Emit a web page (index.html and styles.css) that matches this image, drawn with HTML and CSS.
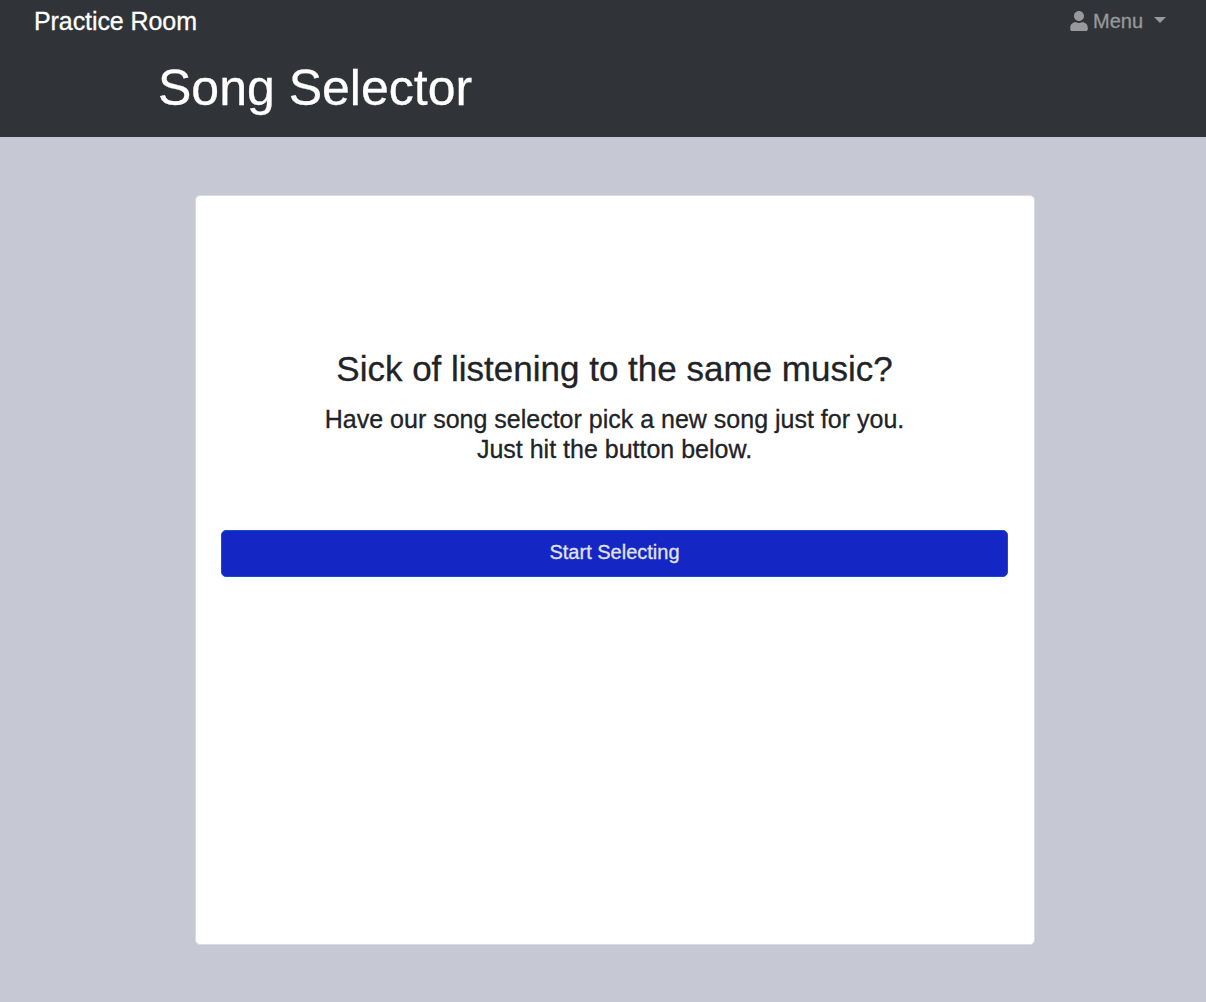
FILE: index.html
```html
<!DOCTYPE html>
<html lang="en">
<head>
<meta charset="utf-8">
<title>Practice Room</title>
<link rel="stylesheet" href="styles.css">
</head>
<body>
<header class="header">
  <nav class="navbar">
    <a class="brand">Practice Room</a>
    <a class="menu">
      <svg class="user" viewBox="0 0 448 512"><path fill="currentColor" d="M224 256c70.7 0 128-57.3 128-128S294.7 0 224 0 96 57.3 96 128s57.3 128 128 128zm89.6 32h-16.7c-22.2 10.2-46.9 16-72.9 16s-50.6-5.8-72.9-16h-16.7C60.2 288 0 348.2 0 422.4V464c0 26.5 21.5 48 48 48h352c26.5 0 48-21.5 48-48v-41.6c0-74.2-60.2-134.4-134.4-134.4z"/></svg>
      <span>Menu</span>
      <i class="caret"></i>
    </a>
  </nav>
  <h1 class="title">Song Selector</h1>
</header>
<main class="main">
  <section class="card">
    <h2 class="heading">Sick of listening to the same music?</h2>
    <p class="lead">Have our song selector pick a new song just for you.<br>Just hit the button below.</p>
    <button class="start">Start Selecting</button>
  </section>
</main>
</body>
</html>
```
FILE: styles.css
```css
* { box-sizing: border-box; }
body {
  margin: 0;
  min-height: 1002px;
  background: #c6c8d4;
  color: #212327;
  font-family: "Liberation Sans", Arial, sans-serif;
  -webkit-text-stroke: 0.3px currentColor;
}
.header {
  height: 137px;
  background: #303338;
  color: #fff;
}
.navbar {
  display: flex;
  justify-content: space-between;
  align-items: center;
  height: 43px;
  padding: 0 40px 0 34px;
}
.brand {
  font-size: 25px;
  letter-spacing: -0.08px;
}
.menu {
  display: flex;
  align-items: center;
  color: #97999c;
  font-size: 20px;
}
.user {
  width: 18px;
  height: 20px;
  margin: 0 5px 2px 0;
}
.caret {
  margin: 0 0 3px 11px;
  border: 6px solid transparent;
  border-top-color: currentColor;
  border-bottom: 0;
}
.title {
  margin: 15px 0 0 158px;
  font-size: 50px;
  font-weight: 400;
  line-height: 60px;
}
.main { padding: 58px 171px 58px 195px; }
.card {
  height: 750px;
  padding: 152px 26px 0 25px;
  border: 1px solid #dbdce0;
  border-radius: 5px;
  background: #fff;
  text-align: center;
}
.heading {
  margin: 0 0 14px;
  font-size: 35px;
  font-weight: 400;
  line-height: 42px;
}
.lead {
  margin: 0 0 66px;
  font-size: 25px;
  line-height: 30px;
}
.start {
  display: block;
  width: 100%;
  height: 47px;
  padding: 0 0 2px;
  border: 1px solid #1450c8;
  border-radius: 5px;
  background: #1427c4;
  color: #e2e3e8;
  font: 20px "Liberation Sans", Arial, sans-serif;
  -webkit-text-stroke: 0.3px currentColor;
}
```
